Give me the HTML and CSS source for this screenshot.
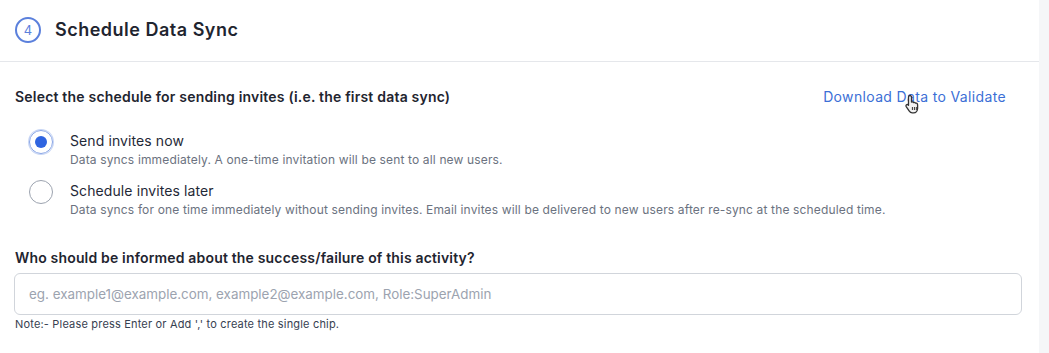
FILE: index.html
```html
<!DOCTYPE html>
<html>
<head>
  <title>Schedule Data Sync</title>
  <link rel="stylesheet" href="styles.css">
</head>
<body>
<div class="panel">
  <div class="header">
    <span class="step">4</span>
    <h2>Schedule Data Sync</h2>
  </div>
  <div class="content">
    <div class="top-row">
      <h3>Select the schedule for sending invites (i.e. the first data sync)</h3>
      <a href="#" class="download">Download Data to Validate
        <svg class="cursor" width="16" height="20" viewBox="0 0 16 20">
          <path d="M5 1.5c.9 0 1.5.6 1.5 1.5v5l.4-.1c.8-.2 1.5.1 1.8.7.7-.3 1.5 0 1.8.6.7-.3 1.6 0 1.9.8.1.3.2.6.2 1v3.5c0 2.3-1.6 4.3-4 4.3H7.2c-1.2 0-2.2-.6-2.9-1.6L1.2 12.6c-.5-.8-.2-1.7.6-2 .6-.2 1.2 0 1.6.5l.1.1V3c0-.9.6-1.5 1.5-1.5z" fill="#f2f2f2" stroke="#333" stroke-width="1.3" stroke-linejoin="round"/>
          <path d="M7.4 13v3M9.4 13v3M11.3 13v3" stroke="#333" stroke-width="1"/>
        </svg>
      </a>
    </div>
    <div class="options">
      <label class="option">
        <input type="radio" name="schedule" checked>
        <span class="radio"></span>
        <span class="option-text">
          <span class="option-title">Send invites now</span>
          <span class="option-desc">Data syncs immediately. A one-time invitation will be sent to all new users.</span>
        </span>
      </label>
      <label class="option">
        <input type="radio" name="schedule">
        <span class="radio"></span>
        <span class="option-text">
          <span class="option-title">Schedule invites later</span>
          <span class="option-desc">Data syncs for one time immediately without sending invites. Email invites will be delivered to new users after re-sync at the scheduled time.</span>
        </span>
      </label>
    </div>
    <h3 class="question">Who should be informed about the success/failure of this activity?</h3>
    <input type="text" class="emails" placeholder="eg. example1@example.com, example2@example.com, Role:SuperAdmin">
    <p class="note">Note:- Please press Enter or Add ',' to create the single chip.</p>
  </div>
</div>
</body>
</html>
```

FILE: styles.css
```css
* {
  box-sizing: border-box;
}
body {
  margin: 0;
  padding: 0;
  font-family: Inter, "Noto Sans", Arial, sans-serif;
  background-color: #f5f6f8;
  color: #1f2937;
}
.panel {
  width: 1039px;
  height: 353px;
  background-color: #fff;
}
.header {
  display: flex;
  align-items: center;
  height: 62px;
  padding-left: 15px;
  padding-bottom: 2px;
  border-bottom: 1px solid #e5e7eb;
}
.step {
  display: flex;
  align-items: center;
  justify-content: center;
  width: 26px;
  height: 26px;
  border: 2px solid #5b80dc;
  border-radius: 50%;
  color: #5b80dc;
  font-size: 13px;
}
.header h2 {
  margin: 0 0 0 14px;
  font-size: 18px;
  font-weight: 600;
  letter-spacing: 0.5px;
  color: #1f2530;
}
.content {
  padding: 0 17px 0 14px;
}
.top-row {
  display: flex;
  justify-content: space-between;
  align-items: center;
  margin-top: 25px;
}
h3 {
  margin: 0;
  padding-left: 1px;
  font-size: 14px;
  font-weight: 600;
  line-height: 20px;
  letter-spacing: 0.2px;
  color: #1f2530;
}
.download {
  position: relative;
  margin-right: 16px;
  font-size: 14px;
  line-height: 20px;
  letter-spacing: 0.35px;
  color: #3c6fd6;
  text-decoration: none;
}
.cursor {
  position: absolute;
  left: 82px;
  top: 7px;
}
.options {
  display: flex;
  flex-direction: column;
  gap: 12px;
  margin-top: 24px;
}
.option {
  display: flex;
  align-items: flex-start;
  cursor: pointer;
}
.option input {
  display: none;
}
.radio {
  position: relative;
  flex: none;
  width: 24px;
  height: 24px;
  margin: -1px 17px 0 15px;
  border: 1.5px solid #9ca3af;
  border-radius: 50%;
}
input:checked + .radio {
  border-color: #8aa6e6;
  box-shadow: 0 0 0 1px #c9d7f5;
}
input:checked + .radio:before {
  content: "";
  position: absolute;
  top: 4.5px;
  left: 4.5px;
  width: 12px;
  height: 12px;
  border-radius: 50%;
  background-color: #2f64e0;
}
.option-text {
  display: flex;
  flex-direction: column;
}
.option-title {
  font-size: 14px;
  line-height: 20px;
  letter-spacing: 0.1px;
  color: #1f2937;
}
.option-desc {
  font-size: 12px;
  line-height: 18px;
  letter-spacing: 0.15px;
  color: #6b7280;
}
.question {
  margin-top: 29px;
  letter-spacing: 0.17px;
}
.emails {
  display: block;
  width: 100%;
  height: 42px;
  margin-top: 5px;
  padding: 0 14px;
  border: 1px solid #d1d5db;
  border-radius: 6px;
  font-family: inherit;
  font-size: 13.4px;
  color: #1f2937;
}
.emails::placeholder {
  color: #9ca3af;
}
.note {
  margin: 1px 0 0 1px;
  font-size: 11px;
  line-height: 16px;
  letter-spacing: 0.18px;
  color: #374151;
}
```
